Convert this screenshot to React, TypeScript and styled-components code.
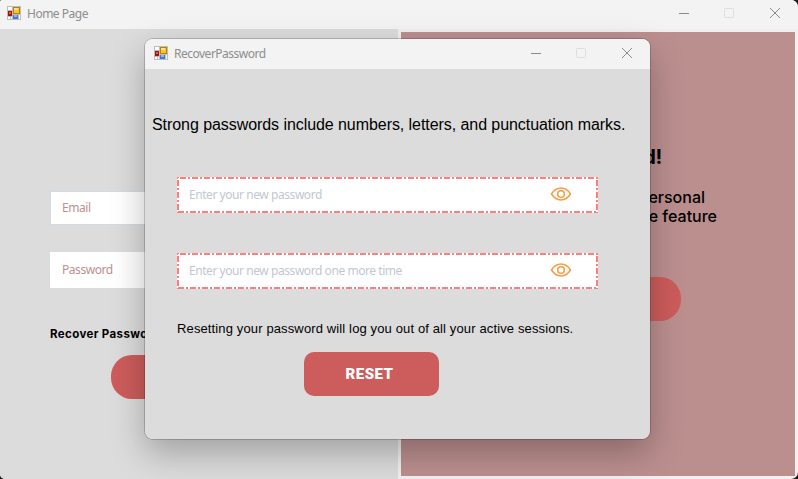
import React from "react";
import styled, { createGlobalStyle } from "styled-components";

const GlobalStyle = createGlobalStyle`
  * { box-sizing: border-box; }
  body { margin: 0; background: #1b1b1b; overflow: hidden; }
`;

const ui = `"Noto Sans", "Open Sans", sans-serif`;
const arial = `"Liberation Sans", Arial, sans-serif`;
const display = `Inter, Roboto, sans-serif`;

const HomeWindow = styled.main`
  position: relative;
  width: 798px;
  height: 479px;
  display: flex;
  flex-direction: column;
  background: #f0f0f0;
  border-radius: 2px 7px 7px 5px;
  overflow: hidden;
`;

const TitleBar = styled.header<{ $height: number; $left: number; $drop: number }>`
  flex: none;
  display: flex;
  align-items: center;
  height: ${(p) => p.$height}px;
  padding: 0 17px ${(p) => p.$drop}px ${(p) => p.$left}px;
  background: #f3f3f3;
`;

const TitleText = styled.span`
  flex: 1;
  margin: 1px 0 0 6px;
  font: 12px/16px ${ui};
  letter-spacing: -0.5px;
  color: #8d8d8d;
`;

const Controls = styled.div`
  display: flex;
  gap: 34px;
`;

const Panels = styled.div`
  flex: 1;
  display: flex;
`;

const LoginPanel = styled.section`
  width: 398px;
  padding: 162px 0 0 50px;
  background: #dcdcdc;
`;

const LoginField = styled.div<{ $height: number; $outlined?: boolean }>`
  display: flex;
  align-items: center;
  width: 296px;
  height: ${(p) => p.$height}px;
  margin-bottom: 27px;
  padding-left: ${(p) => (p.$outlined ? 11 : 12)}px;
  background: #fff;
  border: ${(p) => (p.$outlined ? "1px solid #d2dbe2" : "none")};
  font: 12px/16px ${ui};
  letter-spacing: -0.45px;
  color: #bc8f8f;
`;

const RecoverLink = styled.a`
  display: block;
  margin-top: 37px;
  font: 700 11.5px/18px ${display};
  letter-spacing: 0.38px;
  color: #000;
`;

const Pill = styled.div<{ $margin: string; $width: number }>`
  width: ${(p) => p.$width}px;
  height: 44px;
  margin: ${(p) => p.$margin};
  border-radius: 21px;
  background: #cd5c5c;
`;

const WelcomePanel = styled.section`
  width: 394px;
  height: 444px;
  margin: 3px 0 0 3px;
  padding-top: 112px;
  background: #bc8f8f;
  color: #000;
`;

const Heading = styled.h2`
  width: 261px;
  margin: 0;
  font: 700 20px/26px ${display};
  letter-spacing: -0.3px;
  text-align: right;
`;

const Blurb = styled.p<{ $width: number }>`
  width: ${(p) => p.$width}px;
  margin: 0;
  font: 500 16px/19px ${display};
  text-align: right;
`;

const BlurbGroup = styled.div`
  margin-top: 18px;
`;

const Dialog = styled.div`
  position: absolute;
  left: 145px;
  top: 39px;
  width: 505px;
  height: 400px;
  display: flex;
  flex-direction: column;
  border-radius: 8px;
  background: #dcdcdc;
  overflow: hidden;
`;

const DialogShadow = styled.div`
  position: absolute;
  left: 145px;
  top: 39px;
  width: 505px;
  height: 400px;
  border-radius: 8px;
  box-shadow: 0 0 0 1px rgba(0, 0, 0, 0.18), 0 14px 34px rgba(0, 0, 0, 0.27);
`;

const DialogBody = styled.div`
  flex: 1;
  display: flex;
  flex-direction: column;
  padding: 46px 0 0 32px;
`;

const Hint = styled.p`
  margin: 0 0 42px -25px;
  font: 16px/20px ${arial};
  letter-spacing: -0.065px;
  white-space: nowrap;
  color: #000;
`;

const PasswordField = styled.div`
  position: relative;
  display: flex;
  align-items: center;
  justify-content: space-between;
  width: 421px;
  height: 36px;
  margin-bottom: 40px;
  padding: 0 26px 0 12px;
  background: #fff;
  font: 12px/16px ${ui};
  letter-spacing: -0.44px;
  color: #c1c8d1;
`;

const DashFrame = styled.svg`
  position: absolute;
  left: 0;
  top: 0;
`;

const Note = styled.p`
  margin: -10px 0 12px;
  font: 13px/20px ${arial};
  letter-spacing: 0.13px;
  white-space: nowrap;
  color: #000;
`;

const ResetButton = styled.button`
  width: 135px;
  height: 44px;
  margin: 0.5px 0 0 126.5px;
  padding: 0 3px 0 0;
  border: 0;
  border-radius: 10px;
  background: #cd5c5c;
  color: #fff;
  font: 900 15px/20px Roboto, sans-serif;
  letter-spacing: 0.45px;
`;

const AppIcon = () => (
  <svg width="14" height="14" viewBox="0 0 14 14" shapeRendering="crispEdges">
    <path d="M0 0h14v14H0z" fill="#bdbdbd" />
    <path d="M1 1h4v3H1zM1 11h2v2H1zM4 11h1v2H4zM12 9h1v4h-1z" fill="#fff" />
    <path d="M1 5h4v5H1z" fill="#a51208" />
    <path d="M2 6h2v2H2z" fill="#e55d4a" />
    <path d="M6 1h7v7H6z" fill="#b98206" />
    <path d="M7 2h5v5H7z" fill="#f8c52c" />
    <path d="M7 2h4v2H7z" fill="#ffe585" />
    <path d="M6 9h5v4H6z" fill="#4278d5" />
    <path d="M7 9h3v2H7z" fill="#8bb5fa" />
  </svg>
);

const WindowButtons = () => (
  <Controls>
    <svg width="12" height="12" viewBox="0 0 12 12">
      <path d="M2 6.5h10" stroke="#8b8b8b" />
    </svg>
    <svg width="12" height="12" viewBox="0 0 12 12">
      <rect x="1.5" y="1.5" width="9" height="9" rx="0.7" fill="none" stroke="#dedede" />
    </svg>
    <svg width="12" height="12" viewBox="0 0 12 12">
      <path d="M1 1l10 10M11 1L1 11" stroke="#8b8b8b" />
    </svg>
  </Controls>
);

const EyeIcon = styled.svg`
  margin-bottom: 2px;
`;

const Eye = () => (
  <EyeIcon width="22" height="14" viewBox="0 0 22 14" fill="none" stroke="#f99b3e" strokeWidth="1.5">
    <path d="M1.5 7C4 3.1 7.1 1.1 11 1.1S18 3.1 20.5 7C18 10.9 14.9 12.9 11 12.9S4 10.9 1.5 7z" />
    <circle cx="11" cy="7" r="3.3" />
  </EyeIcon>
);

const PasswordInput = ({ label }: { label: string }) => (
  <PasswordField>
    <DashFrame width="421" height="36" fill="none" stroke="#fa8080" strokeWidth="2" strokeDasharray="6 2 2 2">
      <path d="M0 1H421" strokeDashoffset="9" />
      <path d="M0 35H421" strokeDashoffset="11" />
      <path d="M1 0V36" strokeDashoffset="9" />
      <path d="M420 0V36" strokeDashoffset="9" />
    </DashFrame>
    <span>{label}</span>
    <Eye />
  </PasswordField>
);

export default function App() {
  return (
    <>
      <GlobalStyle />
      <HomeWindow>
        <TitleBar $height={29} $left={7} $drop={3}>
          <AppIcon />
          <TitleText>Home Page</TitleText>
          <WindowButtons />
        </TitleBar>
        <Panels>
          <LoginPanel>
            <LoginField $height={34} $outlined>Email</LoginField>
            <LoginField $height={36}>Password</LoginField>
            <RecoverLink>Recover Password</RecoverLink>
            <Pill $width={180} $margin="11.5px 0 0 60.5px" />
          </LoginPanel>
          <WelcomePanel>
            <Heading>Friend!</Heading>
            <BlurbGroup>
              <Blurb $width={304}>personal</Blurb>
              <Blurb $width={316}>the feature</Blurb>
            </BlurbGroup>
            <Pill $width={180} $margin="50.5px 0 0 99.500px" />
          </WelcomePanel>
        </Panels>
        <DialogShadow />
        <Dialog>
          <TitleBar $height={30} $left={9} $drop={2}>
            <AppIcon />
            <TitleText>RecoverPassword</TitleText>
            <WindowButtons />
          </TitleBar>
          <DialogBody>
            <Hint>Strong passwords include numbers, letters, and punctuation marks.</Hint>
            <PasswordInput label="Enter your new password" />
            <PasswordInput label="Enter your new password one more time" />
            <Note>Resetting your password will log you out of all your active sessions.</Note>
            <ResetButton>RESET</ResetButton>
          </DialogBody>
        </Dialog>
      </HomeWindow>
    </>
  );
}
